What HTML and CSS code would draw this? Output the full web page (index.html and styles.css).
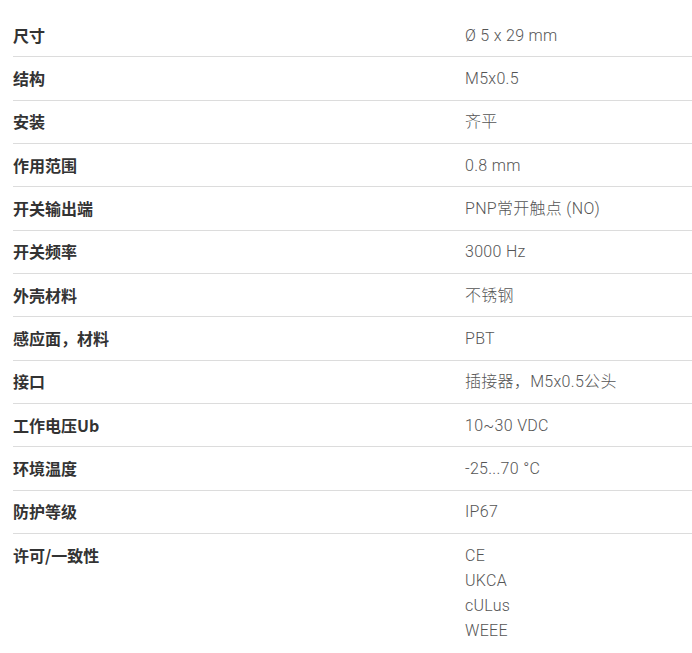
FILE: index.html
```html
<!DOCTYPE html>
<html lang="zh">
<head>
<meta charset="utf-8">
<link rel="stylesheet" href="styles.css">
</head>
<body>
<div class="specs">
  <div class="row"><div class="label">尺寸</div><div class="value">Ø 5 x 29 mm</div></div>
  <div class="row"><div class="label">结构</div><div class="value">M5x0.5</div></div>
  <div class="row"><div class="label">安装</div><div class="value">齐平</div></div>
  <div class="row"><div class="label">作用范围</div><div class="value">0.8 mm</div></div>
  <div class="row"><div class="label">开关输出端</div><div class="value">PNP常开触点 (NO)</div></div>
  <div class="row"><div class="label">开关频率</div><div class="value">3000 Hz</div></div>
  <div class="row"><div class="label">外壳材料</div><div class="value">不锈钢</div></div>
  <div class="row"><div class="label">感应面，材料</div><div class="value">PBT</div></div>
  <div class="row"><div class="label">接口</div><div class="value">插接器，M5x0.5公头</div></div>
  <div class="row"><div class="label">工作电压Ub</div><div class="value">10~30 VDC</div></div>
  <div class="row"><div class="label">环境温度</div><div class="value">-25...70 °C</div></div>
  <div class="row"><div class="label">防护等级</div><div class="value">IP67</div></div>
  <div class="row last"><div class="label">许可/一致性</div><div class="value"><div>CE</div><div>UKCA</div><div>cULus</div><div>WEEE</div></div></div>
</div>
</body>
</html>
```

FILE: styles.css
```css
html, body {
  margin: 0;
  padding: 0;
  background: #fff;
}
.specs {
  margin-left: 13px;
  padding-top: 14px;
  font-size: 16px;
  line-height: 25px;
}
.row {
  display: grid;
  grid-template-columns: 452px 1fr;
  padding: 8.68px 0;
  border-bottom: 1px solid #dcdcdc;
}
.row.last {
  border-bottom: none;
}
.label {
  font-family: "Noto Sans CJK SC", "Noto Sans", sans-serif;
  font-weight: 700;
  color: #333;
}
.value {
  font-family: Roboto, "Noto Sans CJK SC", sans-serif;
  font-weight: 300;
  letter-spacing: 0.3px;
  color: #555;
}
```
